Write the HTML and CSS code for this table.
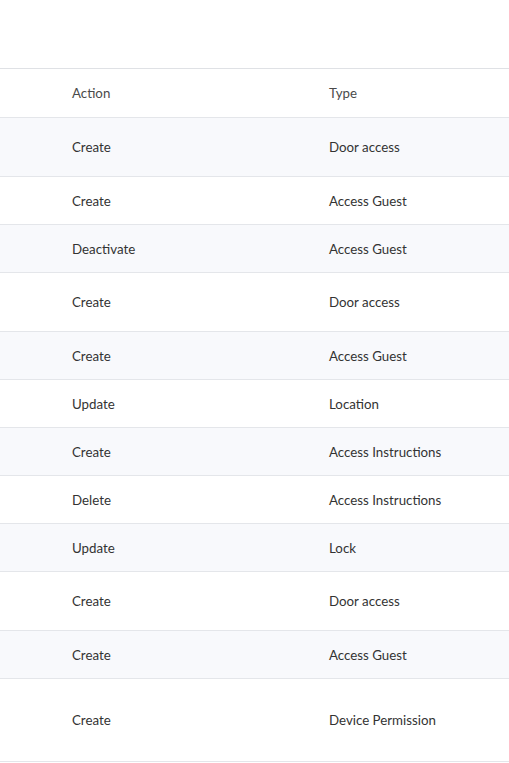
FILE: index.html
```html
<!DOCTYPE html>
<html>
<head>
<meta charset="utf-8">
<link rel="stylesheet" href="styles.css">
</head>
<body>
<div class="page">
  <div class="table">
    <div class="row head"><div class="cell">Action</div><div class="cell">Type</div></div>
    <div class="row alt tall"><div class="cell">Create</div><div class="cell">Door access</div></div>
    <div class="row"><div class="cell">Create</div><div class="cell">Access Guest</div></div>
    <div class="row alt"><div class="cell">Deactivate</div><div class="cell">Access Guest</div></div>
    <div class="row tall"><div class="cell">Create</div><div class="cell">Door access</div></div>
    <div class="row alt"><div class="cell">Create</div><div class="cell">Access Guest</div></div>
    <div class="row"><div class="cell">Update</div><div class="cell">Location</div></div>
    <div class="row alt"><div class="cell">Create</div><div class="cell">Access Instructions</div></div>
    <div class="row"><div class="cell">Delete</div><div class="cell">Access Instructions</div></div>
    <div class="row alt"><div class="cell">Update</div><div class="cell">Lock</div></div>
    <div class="row tall"><div class="cell">Create</div><div class="cell">Door access</div></div>
    <div class="row alt"><div class="cell">Create</div><div class="cell">Access Guest</div></div>
    <div class="row xtall"><div class="cell">Create</div><div class="cell">Device Permission</div></div>
  </div>
</div>
</body>
</html>
```
FILE: styles.css
```css
html, body {
  margin: 0;
  padding: 0;
  background: #ffffff;
}
body {
  font-family: Lato, "Liberation Sans", sans-serif;
  font-size: 13.3px;
  color: #333333;
}
.page {
  padding-top: 68px;
}
.table {
  border-top: 1px solid #dfe1e5;
}
.row {
  display: grid;
  grid-template-columns: 257px 1fr;
  align-items: center;
  padding-left: 72px;
  height: 47px;
  border-bottom: 1px solid #e4e6ea;
}
.row.head {
  height: 48px;
  color: #4a4a4a;
}
.row.head .cell {
  margin-top: -1px;
}
.row.tall {
  height: 58px;
}
.row.xtall {
  height: 82px;
}
.row.alt {
  background: #f8f9fc;
}
```
